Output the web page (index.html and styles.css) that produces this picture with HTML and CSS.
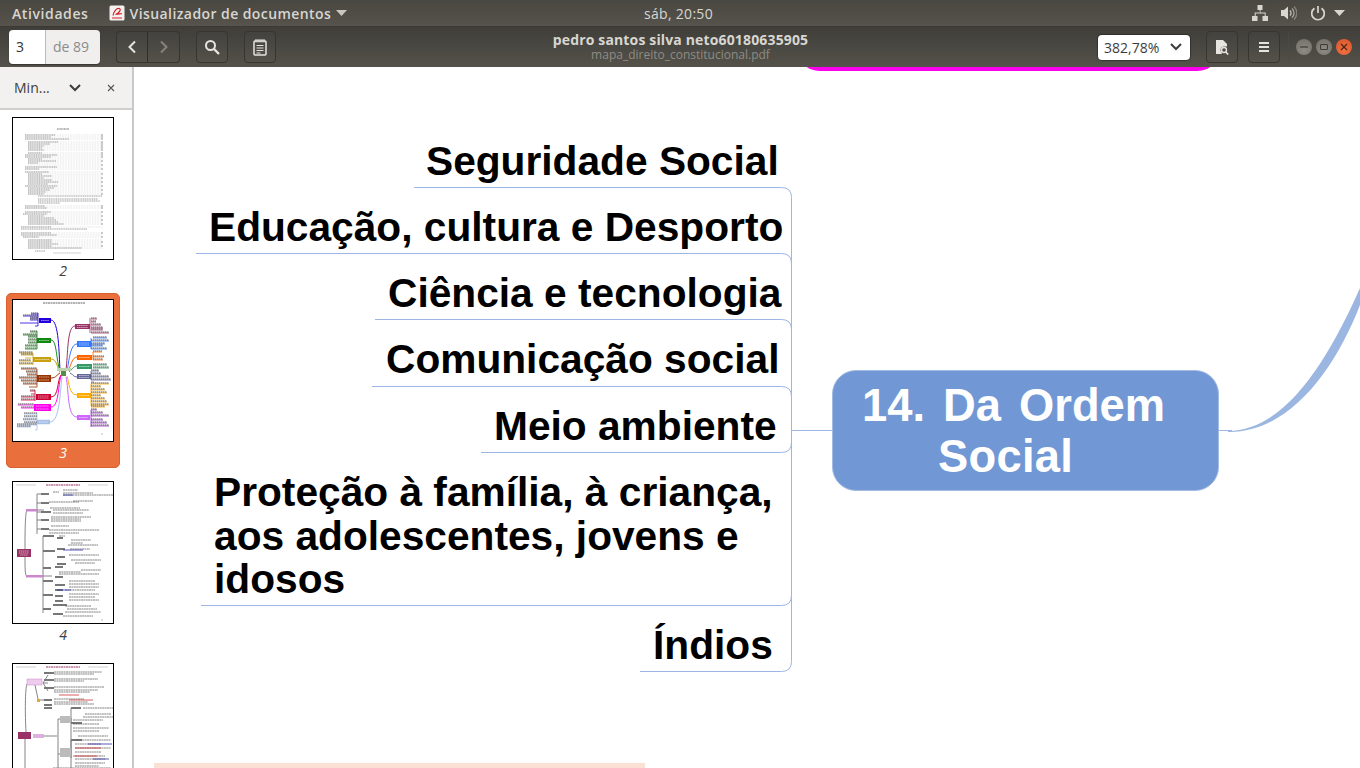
FILE: index.html
```html
<!DOCTYPE html>
<html lang="pt-BR">
<head>
<meta charset="utf-8">
<title>Visualizador de documentos</title>
<link rel="stylesheet" href="styles.css">
</head>
<body>
<header class="topbar">
  <div class="top-left">
    <span class="top-label activities">Atividades</span>
    <span class="app-menu">
      <svg class="app-icon" width="16" height="16" viewBox="0 0 16 16"><rect x=".5" y=".5" width="15" height="15" rx="1.500" fill="#f4f2f0"/><path d="M4 10.500C5 6 8 2.500 10.500 3.500 12.500 4.500 10 8 6.500 9.500 9 8.500 12 9 13 8.500M3 13h10" fill="none" stroke="#d3232a" stroke-width="1.200"/></svg>
      <span class="top-label">Visualizador de documentos</span>
      <svg width="11" height="6" viewBox="0 0 11 6"><path d="M0 0h11L5.500 6z" fill="#c9c7c0"/></svg>
    </span>
  </div>
  <div class="top-label clock">sáb, 20:50</div>
  <div class="top-right">
    <svg width="16" height="16" viewBox="0 0 16 16"><path d="M5.500 0h5v5h-5zM0 11h5.500v5H0zM10.500 11H16v5h-5.500zM7.500 5h1v2.500h5.200V11h-1V8.500h-9V11h-1V7.500h5.300z" fill="#d8d6d0"/></svg>
    <svg width="16" height="16" viewBox="0 0 16 16"><path d="M0 5h3l4-3.500v13L3 11H0z" fill="#d8d6d0"/><path d="M9 5.500a3.500 3.500 0 0 1 0 5" fill="none" stroke="#c4c2bb" stroke-width="1.300"/><path d="M11 3.500a6 6 0 0 1 0 9" fill="none" stroke="#a8a69f" stroke-width="1.300"/><path d="M13 1.500a9 9 0 0 1 0 13" fill="none" stroke="#85837c" stroke-width="1.300"/></svg>
    <svg width="16" height="16" viewBox="0 0 16 16"><path d="M8 1v7" stroke="#d8d6d0" stroke-width="1.700" fill="none"/><path d="M4.500 3.200a6.300 6.300 0 1 0 7 0" fill="none" stroke="#d8d6d0" stroke-width="1.700"/></svg>
    <svg class="top-caret" width="11" height="6" viewBox="0 0 11 6"><path d="M0 0h11L5.500 6z" fill="#d8d6d0"/></svg>
  </div>
</header>

<div class="toolbar">
  <div class="tool-left">
    <div class="page-entry"><span class="page-num">3</span><span class="page-total">de 89</span></div>
    <div class="btn-group">
      <button class="tbtn joined-l" type="button"><svg width="10" height="14" viewBox="0 0 10 14"><path d="M8 1.500 2.500 7 8 12.500" fill="none" stroke="#e6e4df" stroke-width="2"/></svg></button>
      <button class="tbtn joined-r" type="button"><svg width="10" height="14" viewBox="0 0 10 14"><path d="M2 1.500 7.500 7 2 12.500" fill="none" stroke="#85837c" stroke-width="2"/></svg></button>
    </div>
    <button class="tbtn" type="button"><svg width="16" height="16" viewBox="0 0 16 16"><circle cx="6.500" cy="6.500" r="4.500" fill="none" stroke="#e6e4df" stroke-width="2"/><path d="m10 10 5 5" stroke="#e6e4df" stroke-width="2.400"/></svg></button>
    <button class="tbtn" type="button"><svg width="14" height="17" viewBox="0 0 14 17"><rect x="1" y="2" width="12" height="14" rx="1" fill="none" stroke="#e6e4df" stroke-width="1.500"/><path d="M3 0v3.500M5 0v3.500M7 0v3.500M9 0v3.500M11 0v3.500" stroke="#e6e4df"/><path d="M3.500 6.500h7M3.500 9h7M3.500 11.500h7M3.500 14h4" stroke="#e6e4df" stroke-width="1.200"/></svg></button>
  </div>
  <div class="doc-title">
    <div class="title-main">pedro santos silva neto60180635905</div>
    <div class="title-sub">mapa_direito_constitucional.pdf</div>
  </div>
  <div class="tool-right">
    <div class="zoom-select"><span>382,78%</span><svg width="12" height="8" viewBox="0 0 12 8"><path d="m1 1 5 5 5-5" fill="none" stroke="#3c3c3c" stroke-width="2"/></svg></div>
    <button class="tbtn" type="button"><svg width="13" height="15" viewBox="0 0 13 15"><path d="M0 0h7l4 4v2.500H7.500a3.500 3.500 0 0 0-2 6l.5 1.500H0z" fill="#e6e4df"/><circle cx="8" cy="10" r="2.500" fill="none" stroke="#e6e4df" stroke-width="1.400"/><path d="m9.800 12 2.400 2.600" stroke="#e6e4df" stroke-width="1.600"/></svg></button>
    <button class="tbtn" type="button"><svg width="14" height="12" viewBox="0 0 14 12"><path d="M2 2h10M2 6h10M2 10h10" stroke="#e6e4df" stroke-width="2"/></svg></button>
    <span class="tool-sep"></span>
    <div class="win-btns">
      <span class="win-btn"><svg width="16" height="16" viewBox="0 0 16 16"><path d="M4 8h8" stroke="#3c3b37" stroke-width="1.200"/></svg></span>
      <span class="win-btn"><svg width="16" height="16" viewBox="0 0 16 16"><rect x="4.500" y="5.500" width="7" height="5" rx=".5" fill="none" stroke="#3c3b37"/></svg></span>
      <span class="win-btn win-close"><svg width="16" height="16" viewBox="0 0 16 16"><path d="m5 5 6 6M11 5l-6 6" stroke="#4a2416" stroke-width="1.200"/></svg></span>
    </div>
  </div>
</div>

<main class="main">
  <aside class="sidebar">
    <div class="side-head">
      <span class="side-title">Min...</span>
      <svg class="side-chev" width="12" height="8" viewBox="0 0 12 8"><path d="m1 1 5 5 5-5" fill="none" stroke="#3c3c3c" stroke-width="2"/></svg>
      <svg class="side-x" width="8" height="8" viewBox="0 0 8 8"><path d="m1 1 6 6M7 1 1 7" stroke="#555" stroke-width="1.100"/></svg>
    </div>
    <div class="thumbs">
      <div class="thumb-item">
        <div class="thumb">
          <svg width="100" height="141" viewBox="0 0 100 141">
            <path d="M44 11h12" stroke="#666" stroke-width="1" stroke-dasharray="1 .4"/>
            <path d="M12 17h78M12 19h78M12 21h78M15 24h75M15 26h75M15 28h75M15 30h75M15 32h75M15 35h75M12 37h78M12 39h78M15 41h75M15 43h75M15 45h75M15 47h75M12 49h78M12 51h78M12 54h78M15 56h75M15 58h75M15 60h75M15 62h75M15 64h75M15 66h75M12 68h78M15 70h75M15 72h75M15 74h75M15 76h75M12 88h78M12 90h78M12 94h78M10 96h80M15 98h75M15 100h75M15 102h75M15 104h75M15 106h75M8 109h82M8 115h82M8 117h82M10 119h80M15 122h75M15 124h75M15 126h75M15 128h75M15 130h75" fill="none" stroke="#c4c4c4" stroke-width=".6" stroke-dasharray=".7 .9"/>
            <path d="M88 17h2M88 19h2M88 21h2M88 24h2M88 26h2M88 28h2M88 30h2M88 32h2M88 35h2M88 37h2M88 39h2M88 43h2M88 47h2M88 51h2M88 56h2M88 60h2M88 64h2M88 68h2M88 72h2M88 76h2M88 88h2M88 90h2M88 94h2M88 98h2M88 102h2M88 106h2M88 115h2M88 119h2M88 124h2M88 128h2" fill="none" stroke="#777" stroke-width=".7"/>
            <path d="M12 17h30M12 19h26M12 21h44M15 24h30M15 26h22M15 28h16M15 30h14M15 32h16M15 35h14M12 37h32M12 39h26M15 41h14M15 43h28M15 45h10M12 49h32M12 51h14M12 54h24M15 56h14M15 58h24M15 60h16M15 62h24M15 64h30M15 66h20M12 68h32M15 70h26M15 72h22M15 74h18M15 76h16M25 78h64M25 81h60M25 83h62M25 85h22M12 88h20M12 90h22M12 94h26M10 96h24M15 98h16M15 100h26M15 102h28M15 104h30M15 106h36M8 109h30M8 111h66M8 115h30M8 117h36M10 119h16M15 122h24M15 124h24M15 126h30M15 128h24M15 130h54M22 133h10" fill="none" stroke="#777" stroke-width=".7" stroke-dasharray="1.300 .5"/>
            <path d="M40 135h28" stroke="#bbb" stroke-width=".7"/>
          </svg>
        </div>
        <div class="thumb-num">2</div>
      </div>

      <div class="thumb-item selected">
        <div class="thumb">
          <svg width="100" height="141" viewBox="0 0 100 141">
            <path d="M30 3h42" stroke="#555" stroke-width=".9" stroke-dasharray="2 .5"/>
            <g fill="none" stroke-width="1">
              <path d="M38 20C46 20 46 55 47 70" stroke="#2200dd"/>
              <path d="M38 40C44 40 43 60 47 71" stroke="#118811"/>
              <path d="M38 59C44 59 44 68 47 72" stroke="#c8a010"/>
              <path d="M38 78C44 78 44 74 47 73" stroke="#993300"/>
              <path d="M38 97C46 97 44 80 48 75" stroke="#cc0033"/>
              <path d="M38 107C46 107 45 85 48 76" stroke="#ff00ee"/>
              <path d="M37 122C47 122 47 90 49 77" stroke="#a8c0e6"/>
              <path d="M62 26C54 26 55 55 53 70" stroke="#993366"/>
              <path d="M64 44C57 44 56 62 54 71" stroke="#3377ff"/>
              <path d="M64 57C59 57 58 66 55 71" stroke="#ff6600"/>
              <path d="M64 66C60 66 59 70 56 72" stroke="#339966"/>
              <path d="M64 77C60 77 60 74 57 73" stroke="#666699"/>
              <path d="M64 95C56 95 56 82 54 76" stroke="#ffaa00"/>
              <path d="M64 117C54 117 56 90 53 77" stroke="#cc66ff"/>
            </g>
            <rect x="44" y="68" width="14" height="3" fill="#bcd5b0"/><rect x="48" y="71" width="5" height="5" fill="#5a8a4a"/>
            <g>
              <path d="M26 20.500h12" stroke="#2200dd" stroke-width="5"/>
              <path d="M24 40.500h14" stroke="#118811" stroke-width="5"/>
              <path d="M20 59.500h18" stroke="#c8a010" stroke-width="5"/>
              <path d="M24 78.500h14" stroke="#993300" stroke-width="7"/>
              <path d="M23 97h15" stroke="#cc0033" stroke-width="6"/>
              <path d="M21 107.500h17" stroke="#ff00ee" stroke-width="7"/>
              <path d="M24 122h13" stroke="#a8c0e6" stroke-width="4.500"/>
              <path d="M62 26.500h15" stroke="#993366" stroke-width="5"/>
              <path d="M64 44h14" stroke="#3377ff" stroke-width="6"/>
              <path d="M64 57.500h15" stroke="#ff6600" stroke-width="5"/>
              <path d="M64 66.500h15" stroke="#339966" stroke-width="5"/>
              <path d="M64 76.500h14" stroke="#666699" stroke-width="5"/>
              <path d="M64 95.500h14" stroke="#ffaa00" stroke-width="5"/>
              <path d="M64 117.500h13" stroke="#cc66ff" stroke-width="5"/>
            </g>
            <g fill="none" stroke-width=".8">
              <path d="M25 13v13M18 14h7M10 16h15M17 18h8M17 20h8M7 23h18M22 26h3" stroke="#2200dd"/>
              <path d="M24 31v18M17 32h7M10 35h14M15 37h9M15 40h9M15 43h9M12 46h12M12 49h12" stroke="#118811"/>
              <path d="M20 53v12M6 53h14M8 55h12M12 58h6M6 61h12M6 64h14" stroke="#c8a010"/>
              <path d="M24 69v18M8 69h16M13 72h11M14 75h10M6 78h18M8 81h16M10 84h14M16 87h8" stroke="#993300"/>
              <path d="M22 90v11M17 91h5M18 94h4M8 97h14M8 100h14" stroke="#cc0033"/>
              <path d="M5 105h16M8 108h13" stroke="#ff00ee"/>
              <path d="M24 113v17M11 114h13M11 117h13M10 120h14M11 123h13M4 125h20M4 127h14M22 130h2" stroke="#a8c0e6"/>
              <path d="M77 18v15M78 19h6M78 22h5M78 25h10M78 28h12M78 30h12M78 33h18" stroke="#993366"/>
              <path d="M78 38v11M80 38h14M78 41h18M78 44h14M78 46h12M78 49h16" stroke="#3377ff"/>
              <path d="M80 52v8M80 52h9M80 57h11M80 60h10" stroke="#ff6600"/>
              <path d="M80 65h14M80 68h16" stroke="#339966"/>
              <path d="M78 71v9M78 71h8M78 74h10M78 77h18M78 80h20M78 82h3" stroke="#666699"/>
              <path d="M78 84v22M78 84h18M78 87h10M78 90h14M78 93h16M78 96h10M78 99h14M78 102h16M78 105h18M78 107h14" stroke="#ffaa00"/>
              <path d="M78 110v17M78 110h6M78 113h12M78 116h18M78 120h12M78 123h16M78 126h18" stroke="#9933cc"/>
            </g>
            <path d="M18 13h7M10 15h15M17 17h8M17 19h8M17 31h7M10 34h14M15 36h9M15 39h9M15 42h9M12 45h12M12 48h12M6 52h14M8 54h12M6 60h12M6 63h14M8 68h16M13 71h11M14 74h10M6 77h18M8 80h16M10 83h14M17 90h5M8 96h14M8 99h14M5 104h16M8 107h13M11 113h13M11 116h13M10 119h14M11 122h13M4 124h20M4 126h14M78 18h6M78 21h5M78 24h10M78 27h12M78 29h12M78 32h18M80 37h14M78 40h18M78 43h14M78 45h12M78 48h16M80 51h9M80 56h11M80 59h10M80 64h14M80 67h16M78 70h8M78 73h10M78 76h18M78 79h20M78 83h18M78 86h10M78 89h14M78 92h16M78 95h10M78 98h14M78 101h16M78 104h18M78 106h14M78 109h6M78 112h12M78 115h18M78 119h12M78 122h16M78 125h18" fill="none" stroke="#444" stroke-width=".9" stroke-dasharray="1.500 .5"/>
            <path d="M28 20.500h8M26 40.500h10M22 59.500h14M26 77h10M26 80h10M25 96h11M25 98h11M23 106h13M23 109h13M26 122h9M64 25.500h11M64 27.500h11M66 43h10M66 45h10M66 57.500h11M66 66.500h11M66 75.500h10M66 77.500h10M66 95.500h10M66 117.500h9" fill="none" stroke="#fff" stroke-width=".7" stroke-dasharray="1.500 .6" stroke-opacity=".8"/>
            <path d="M88 134h2" stroke="#bbb"/>
          </svg>
        </div>
        <div class="thumb-num">3</div>
      </div>

      <div class="thumb-item">
        <div class="thumb">
          <svg width="100" height="141" viewBox="0 0 100 141">
            <path d="M33 3h34" stroke="#993366" stroke-width="1.200" stroke-dasharray="2 .5"/>
            <path d="M3 3h20M75 3h20" stroke="#bbb" stroke-width=".7"/>
            <g fill="none" stroke="#777" stroke-width=".9">
              <path d="M12 67C12 55 12 30 14 28M12 75C12 85 12 95 14 94"/>
              <path d="M24 28h7M24 12v40M24 12h4M24 21h4M24 30h4M24 38h4M24 47h4"/>
              <path d="M30 94h9M30 54v77M30 54h3M30 69h3M30 86h3M30 99h3M30 113h3M30 127h3"/>
            </g>
            <rect x="4" y="67" width="14" height="8" fill="#993366"/>
            <path d="M6 69h10M6 71h10M7 73h8" stroke="#f0d0e0" stroke-width=".7" stroke-dasharray="1.500 .5"/>
            <rect x="13" y="27" width="11" height="2.500" fill="#cc88cc"/>
            <rect x="13" y="93" width="17" height="2.500" fill="#cc88cc"/>
            <g fill="none" stroke="#777" stroke-width="2">
              <path d="M28 12h8M28 21h8M28 30h10M28 38h8M28 47h8M30 54h11M44 56h6M30 69h12M44 67h8M44 75h8M44 82h9M30 86h8M42 85h8M42 95h8M30 99h10M42 103h10M42 108h8M30 113h10M42 114h8M42 119h8M30 127h8M40 123h14M40 132h10"/>
            </g>
            <g fill="none" stroke="#666" stroke-width=".8" stroke-dasharray="2 .4">
              <path d="M40 10h6M50 8h15M50 11h30M50 13h50M36 20h30M60 19h20M37 26h30M40 28h36M40 31h30M38 35h40M38 37h30M38 39h30M38 44h18M36 48h50M36 51h30M46 54h6M58 58h20M58 61h12M55 63h30M57 67h20M56 73h30M58 78h30M62 81h20M46 90h22M68 88h20M46 92h40M56 99h26M56 102h30M56 105h30M52 108h30M56 112h30M56 115h26M56 118h30M52 124h26M54 127h30M52 130h36M50 134h30"/>
            </g>
            <path d="M50 68h20M44 108h14M50 13h10" stroke="#33a" stroke-width=".8"/>
            <path d="M88 138h2" stroke="#bbb"/>
          </svg>
        </div>
        <div class="thumb-num">4</div>
      </div>

      <div class="thumb-item">
        <div class="thumb">
          <svg width="100" height="141" viewBox="0 0 100 141">
            <path d="M33 3h34" stroke="#993366" stroke-width="1.200" stroke-dasharray="2 .5"/>
            <path d="M3 3h20M75 3h20" stroke="#bbb" stroke-width=".7"/>
            <g fill="none" stroke="#777" stroke-width=".9">
              <path d="M13 68C12 50 12 25 14 20M12 75V105"/>
              <path d="M30 19l5-8M30 19h5M30 19l5 8"/>
              <path d="M22 21l3 14M27 36h5"/>
              <path d="M31 72h13M45 55v60M45 55h3M45 90h3"/>
              <path d="M58 54v40M58 44v14M58 76v40"/>
            </g>
            <rect x="5" y="68" width="13" height="7" fill="#993366"/>
            <rect x="14" y="15" width="15" height="6" fill="#eeccee" stroke="#cc88cc" stroke-width=".5"/>
            <rect x="20" y="70" width="11" height="4" fill="#ddb0dd"/>
            <rect x="24" y="35" width="3" height="3" fill="#ddaa33"/>
            <rect x="47" y="52" width="11" height="7" fill="#bbb"/>
            <rect x="47" y="84" width="11" height="9" fill="#bbb"/>
            <g fill="none" stroke="#777" stroke-width="2">
              <path d="M31 9h10M31 16h10M31 24h10M31 36h8M31 41h8M31 44h8"/>
              <path d="M58 44h10M58 59h11M58 76h11"/>
            </g>
            <g fill="none" stroke="#666" stroke-width=".8" stroke-dasharray="2 .4">
              <path d="M41 8h48M41 10h40M41 15h44M41 17h30M41 23h50M41 26h44M41 28h36M41 35h30M41 38h34M41 40h40M70 44h30M72 50h26M70 53h30M60 56h30M60 60h26M60 64h36M60 67h26M65 72h30M62 76h36M62 80h26M62 84h36M62 88h26M62 92h30M62 95h30M62 99h30M62 102h24M62 106h36M40 104h58"/>
            </g>
            <path d="M46 31h20M56 36h24M62 84h26M60 92h24" stroke="#c33" stroke-width=".8" fill="none"/>
            <path d="M75 80h24M80 95h16" stroke="#33a" stroke-width=".8" fill="none"/>
          </svg>
        </div>
      </div>
    </div>
  </aside>

  <section class="canvas">
    <div class="magenta-node"></div>
    <svg class="links" width="1226" height="701" viewBox="134 67 1226 701">
      <g fill="none" stroke="#9db6e3" stroke-width="1">
        <path d="M414 187.500H781.500Q791.500 187.500 791.500 197.500V661.500Q791.500 671.500 781.500 671.500H640"/>
        <path d="M196 253.500H781.500Q791.500 253.500 791.500 263.500"/>
        <path d="M375 319.500H781.500Q791.500 319.500 791.500 329.500"/>
        <path d="M372 386.500H781.500Q791.500 386.500 791.500 396.500"/>
        <path d="M481 452.500H781.500Q791.500 452.500 791.500 442.500"/>
        <path d="M201 605.500H781.500Q791.500 605.500 791.500 595.500"/>
        <path d="M791 430.500H832"/>
        <path d="M1219 430.500H1232"/>
      </g>
      <path d="M1228 431C1286 430 1328 360 1360 288V305C1334 372 1288 433 1228 432Z" fill="#9ab6e1"/>
    </svg>
    <div class="branch b1">Seguridade Social</div>
    <div class="branch b2">Educação, cultura e Desporto</div>
    <div class="branch b3">Ciência e tecnologia</div>
    <div class="branch b4">Comunicação social</div>
    <div class="branch b5">Meio ambiente</div>
    <div class="branch b6">Proteção à família, à criança,<br>aos adolescentes, jovens e<br>idosos</div>
    <div class="branch b7">Índios</div>
    <div class="center-node"><span class="cn-line1">14. Da Ordem</span><span class="cn-line2">Social</span></div>
    <div class="peach"></div>
  </section>
</main>
</body>
</html>
```
FILE: styles.css
```css
* { box-sizing: border-box; }
html, body { margin: 0; height: 100%; }
body {
  width: 1360px;
  height: 768px;
  overflow: hidden;
  display: flex;
  flex-direction: column;
  font-family: "Open Sans", "Noto Sans", sans-serif;
  background: #fff;
}

/* top shell bar */
.topbar {
  height: 26px;
  flex: none;
  display: grid;
  grid-template-columns: 1fr auto 1fr;
  align-items: center;
  padding: 0 15px 0 12px;
  background: linear-gradient(#494741, #55534b);
}
.top-left { display: flex; align-items: center; gap: 20px; }
.app-menu { display: flex; align-items: center; gap: 5px; }
.top-label {
  font-size: 14px;
  font-weight: 600;
  color: #d8d6d0;
  letter-spacing: .42px;
  white-space: nowrap;
}
.activities { letter-spacing: .6px; }
.clock { font-weight: 400; letter-spacing: .3px; }
.top-right { display: flex; align-items: center; justify-content: flex-end; gap: 13px; }
.top-caret { margin-left: -5px; }
.app-icon { flex: none; }

/* window toolbar */
.toolbar {
  height: 41px;
  flex: none;
  display: grid;
  grid-template-columns: 1fr auto 1fr;
  align-items: center;
  padding: 0 8px 0 9px;
  background: linear-gradient(#3f3e39, #54524a);
  border-top: 1px solid #3a3934;
}
.tool-left { display: flex; align-items: center; gap: 16px; }
.tool-right { display: flex; align-items: center; justify-content: flex-end; gap: 10px; }
.page-entry {
  display: flex;
  width: 91px;
  height: 34px;
  border-radius: 4px;
  overflow: hidden;
  font-size: 14px;
  line-height: 34px;
  box-shadow: 0 1px 1px rgba(0,0,0,.35);
}
.page-num { width: 37px; padding-left: 7px; background: #fff; color: #333; border-right: 1px solid #bdbbb6; }
.page-total { flex: 1; padding-left: 7px; background: #f0efee; color: #8c8c8c; }
.btn-group { display: flex; }
.tbtn {
  width: 32px;
  height: 32px;
  padding: 0;
  display: flex;
  align-items: center;
  justify-content: center;
  background: rgba(255,255,255,.015);
  border: 1px solid #363530;
  border-radius: 4px;
}
.joined-l { border-radius: 4px 0 0 4px; border-right: 1px solid #2f2e2a; }
.joined-r { border-radius: 0 4px 4px 0; border-left: none; }
.doc-title { text-align: center; line-height: 15px; white-space: nowrap; }
.title-main { font-size: 14px; font-weight: 700; color: #d8d6d0; letter-spacing: .15px; }
.title-sub { font-size: 12px; color: #8e8c84; }
.zoom-select {
  width: 92px;
  height: 25px;
  margin-right: 6px;
  padding: 0 8px 0 6px;
  display: flex;
  align-items: center;
  justify-content: space-between;
  background: #fff;
  border-radius: 4px;
  font-size: 14px;
  color: #3d3d3d;
  box-shadow: 0 0 1px 1px rgba(0,0,0,.3);
}
.tool-sep { width: 1px; height: 28px; background: #4c4a44; margin: 0 -3px 0 -2px; }
.win-btns { display: flex; gap: 4px; }
.win-btn {
  width: 16px;
  height: 16px;
  border-radius: 50%;
  background: radial-gradient(circle at 50% 70%, #8e8c84, #6e6c65);
  display: block;
}
.win-close { background: radial-gradient(circle at 50% 70%, #ef7240, #d9512a); }
.win-btn svg { display: block; }

/* body */
.main { flex: 1; display: flex; min-height: 0; }
.sidebar {
  width: 134px;
  flex: none;
  background: #fff;
  border-right: 2px solid #c9c9c9;
  overflow: hidden;
}
.side-head {
  height: 43px;
  display: flex;
  align-items: center;
  padding: 0 0 0 14px;
  background: #f2f1f0;
  border-bottom: 2px solid #d0cfce;
}
.side-title { font-size: 14px; color: #3d3d3d; width: 55px; }
.side-chev { margin-right: 26px; }
.thumbs { display: flex; flex-direction: column; gap: 7px; padding: 1px 0 0 6px; }
.thumb-item {
  width: 114px;
  height: 175px;
  flex: none;
  padding: 5px;
  border-radius: 5px;
  border: 1px solid transparent;
}
.thumb-item.selected { background: #e96f3d; border-color: #d8622f; }
.thumb { width: 102px; height: 143px; border: 1px solid #000; background: #fff; }
.thumb svg { display: block; }
.thumb-num {
  height: 22px;
  line-height: 22px;
  text-align: center;
  font-size: 14px;
  font-style: italic;
  color: #3d3d3d;
}
.selected .thumb-num { color: #fff; }

/* document page: free canvas of a mind-map */
.canvas { position: relative; flex: 1; overflow: hidden; background: #fff; }
.links { position: absolute; left: 0; top: 0; }
.magenta-node {
  position: absolute;
  left: 662px;
  top: -60px;
  width: 425px;
  height: 64px;
  background: #fd00ee;
  border-radius: 24px;
}
.branch {
  position: absolute;
  font-family: "Liberation Sans", Arial, sans-serif;
  font-weight: 700;
  font-size: 40.7px;
  line-height: 43.5px;
  color: #000;
  white-space: nowrap;
}
.b1 { left: 292px; top: 73px; }
.b2 { left: 75px; top: 139px; }
.b3 { left: 254px; top: 205px; }
.b4 { left: 252px; top: 271px; }
.b5 { left: 360px; top: 338px; }
.b6 { left: 80px; top: 404px; }
.b7 { left: 519px; top: 557px; }
.center-node {
  position: absolute;
  left: 698px;
  top: 303px;
  width: 387px;
  height: 121px;
  background: #7198d5;
  border: 1px solid #a3bbe3;
  border-radius: 24px;
  font-family: "Liberation Sans", Arial, sans-serif;
  font-weight: 700;
  font-size: 45.3px;
  line-height: 51px;
  color: #fff;
  white-space: nowrap;
}
.cn-line1 { display: block; margin: 9px 0 0 29px; word-spacing: 5.5px; }
.cn-line2 { display: block; margin-left: 105px; letter-spacing: .3px; }
.peach {
  position: absolute;
  left: 20px;
  top: 696px;
  width: 491px;
  height: 5px;
  background: #fbe0d4;
}
```
